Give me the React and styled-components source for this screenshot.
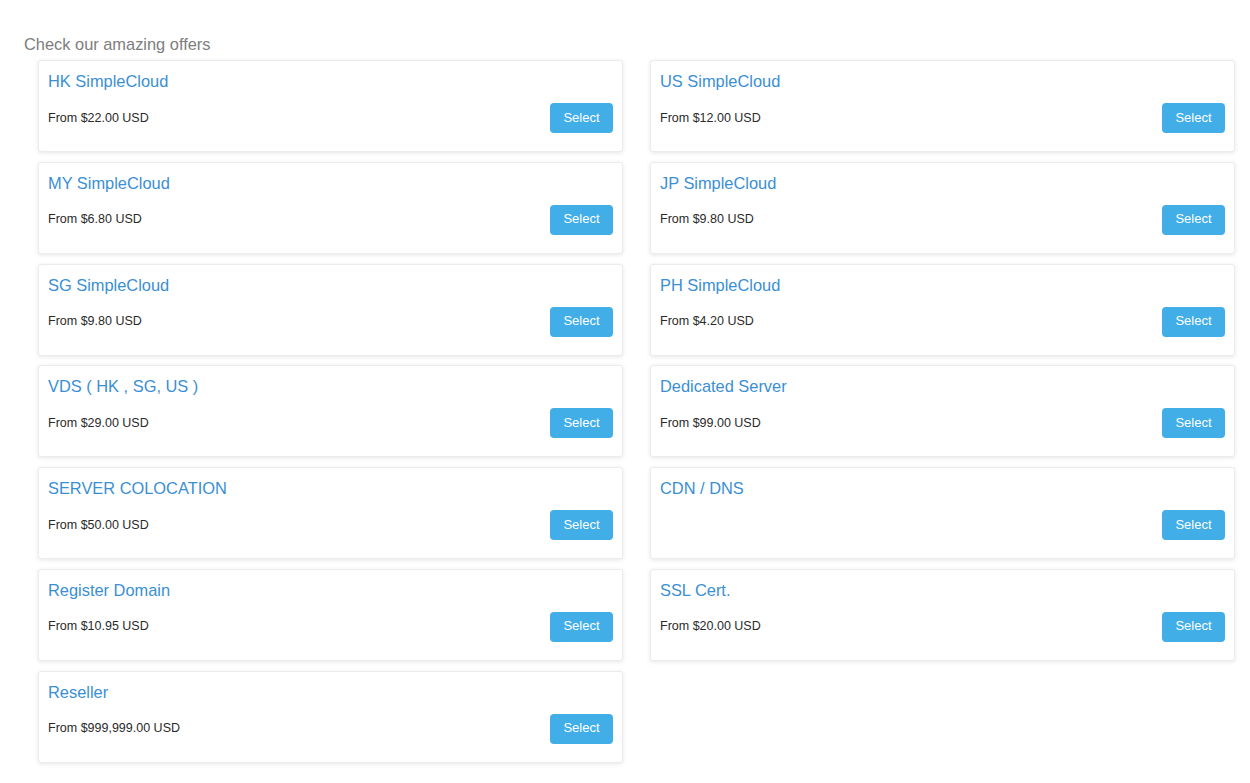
import React from "react";
import styled, { createGlobalStyle } from "styled-components";

const Global = createGlobalStyle`
  html, body { margin: 0; padding: 0; background: #fff; }
  body { font-family: "Liberation Sans", Arial, sans-serif; }
`;

const Page = styled.div`
  padding: 34px 15px 20px 24px;
`;

const Heading = styled.h2`
  margin: 0 0 6px 0;
  font-size: 16.4px;
  font-weight: normal;
  line-height: 20px;
  color: #7d7d7d;
`;

const Grid = styled.div`
  margin-left: 14px;
  display: grid;
  grid-template-columns: 585px 585px;
  column-gap: 27px;
  row-gap: 9.8px;
`;

const Card = styled.div`
  box-sizing: border-box;
  height: 92px;
  border: 1px solid #ececec;
  border-radius: 3px;
  background: #fff;
  box-shadow: 0 1px 4px rgba(0, 0, 0, 0.1);
  padding: 10px 9px 0 9px;
  display: flex;
  flex-direction: column;
`;

const Title = styled.div`
  font-size: 16.4px;
  line-height: 20px;
  color: #3a8fd4;
`;

const Row = styled.div`
  margin-top: 12px;
  display: flex;
  align-items: center;
  justify-content: space-between;
  height: 30px;
`;

const Price = styled.div`
  font-size: 12.5px;
  color: #2a2a2a;
  padding-bottom: 1px;
`;

const Button = styled.button`
  box-sizing: border-box;
  width: 63px;
  height: 30px;
  border: none;
  border-radius: 4px;
  background: #41aee8;
  color: #fff;
  font-family: "Liberation Sans", Arial, sans-serif;
  font-size: 13px;
  padding: 0 0 2px 0;
  cursor: pointer;
`;

const offers = [
  ["HK SimpleCloud", "From $22.00 USD"],
  ["US SimpleCloud", "From $12.00 USD"],
  ["MY SimpleCloud", "From $6.80 USD"],
  ["JP SimpleCloud", "From $9.80 USD"],
  ["SG SimpleCloud", "From $9.80 USD"],
  ["PH SimpleCloud", "From $4.20 USD"],
  ["VDS ( HK , SG, US )", "From $29.00 USD"],
  ["Dedicated Server", "From $99.00 USD"],
  ["SERVER COLOCATION", "From $50.00 USD"],
  ["CDN / DNS", ""],
  ["Register Domain", "From $10.95 USD"],
  ["SSL Cert.", "From $20.00 USD"],
  ["Reseller", "From $999,999.00 USD"],
];

export default function App() {
  return (
    <>
      <Global />
      <Page>
        <Heading>Check our amazing offers</Heading>
        <Grid>
          {offers.map(([t, p]) => (
            <Card key={t}>
              <Title>{t}</Title>
              <Row>
                <Price>{p}</Price>
                <Button>Select</Button>
              </Row>
            </Card>
          ))}
        </Grid>
      </Page>
    </>
  );
}
